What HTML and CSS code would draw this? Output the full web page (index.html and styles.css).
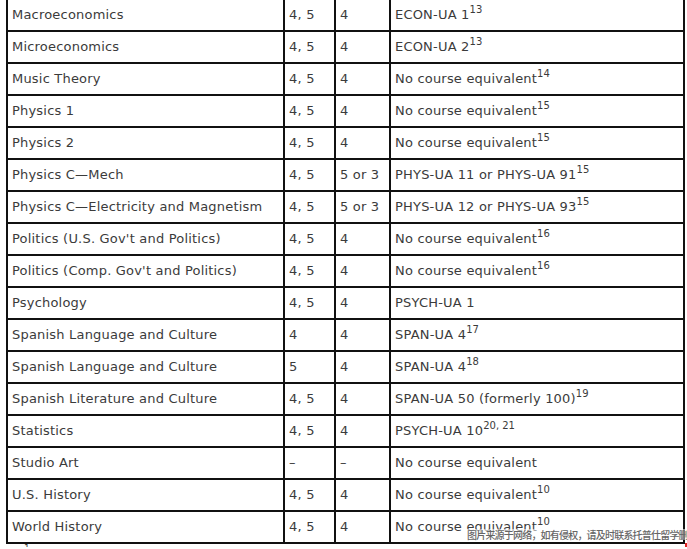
FILE: index.html
```html
<!DOCTYPE html>
<html>
<head>
<meta charset="utf-8">
<link rel="stylesheet" href="styles.css">
</head>
<body>
<div class="page">
  <table class="ap">
    <colgroup>
      <col class="c1"><col class="c2"><col class="c3"><col class="c4">
    </colgroup>
    <tbody>
      <tr><td>Macroeconomics</td><td>4, 5</td><td>4</td><td>ECON-UA 1<sup>13</sup></td></tr>
      <tr><td>Microeconomics</td><td>4, 5</td><td>4</td><td>ECON-UA 2<sup>13</sup></td></tr>
      <tr><td>Music Theory</td><td>4, 5</td><td>4</td><td>No course equivalent<sup>14</sup></td></tr>
      <tr><td>Physics 1</td><td>4, 5</td><td>4</td><td>No course equivalent<sup>15</sup></td></tr>
      <tr><td>Physics 2</td><td>4, 5</td><td>4</td><td>No course equivalent<sup>15</sup></td></tr>
      <tr><td>Physics C—Mech</td><td>4, 5</td><td>5 or 3</td><td>PHYS-UA 11 or PHYS-UA 91<sup>15</sup></td></tr>
      <tr><td>Physics C—Electricity and Magnetism</td><td>4, 5</td><td>5 or 3</td><td>PHYS-UA 12 or PHYS-UA 93<sup>15</sup></td></tr>
      <tr><td>Politics (U.S. Gov't and Politics)</td><td>4, 5</td><td>4</td><td>No course equivalent<sup>16</sup></td></tr>
      <tr><td>Politics (Comp. Gov't and Politics)</td><td>4, 5</td><td>4</td><td>No course equivalent<sup>16</sup></td></tr>
      <tr><td>Psychology</td><td>4, 5</td><td>4</td><td>PSYCH-UA 1</td></tr>
      <tr><td>Spanish Language and Culture</td><td>4</td><td>4</td><td>SPAN-UA 4<sup>17</sup></td></tr>
      <tr><td>Spanish Language and Culture</td><td>5</td><td>4</td><td>SPAN-UA 4<sup>18</sup></td></tr>
      <tr><td>Spanish Literature and Culture</td><td>4, 5</td><td>4</td><td>SPAN-UA 50 (formerly 100)<sup>19</sup></td></tr>
      <tr><td>Statistics</td><td>4, 5</td><td>4</td><td>PSYCH-UA 10<sup>20, 21</sup></td></tr>
      <tr><td>Studio Art</td><td>–</td><td>–</td><td>No course equivalent</td></tr>
      <tr><td>U.S. History</td><td>4, 5</td><td>4</td><td>No course equivalent<sup>10</sup></td></tr>
      <tr><td>World History</td><td>4, 5</td><td>4</td><td>No course equivalent<sup>10</sup></td></tr>
    </tbody>
  </table>
  <div class="foot"><sup>1</sup></div>
  <div class="watermark">图片来源于网络，如有侵权，请及时联系托普仕留学删除</div>
  <div class="redmark"></div>
</div>
</body>
</html>
```
FILE: styles.css
```css
html, body {
  margin: 0;
  padding: 0;
  background: #fff;
  overflow: hidden;
}
.page {
  position: relative;
  width: 687px;
  height: 549px;
  padding-left: 6px;
  box-sizing: border-box;
  font-family: "DejaVu Sans", sans-serif;
  color: #3b3b3b;
}
.ap {
  border-collapse: collapse;
  table-layout: fixed;
  width: 677px;
  margin-top: -2px;
}
.c1 { width: 277px; }
.c2 { width: 51px; }
.c3 { width: 55px; }
.c4 { width: 294px; }
.ap td {
  border: 2px solid #111;
  height: 30px;
  padding: 0 3px 0 4px;
  font-size: 13px;
  line-height: 16px;
  letter-spacing: 0.2px;
  white-space: nowrap;
  overflow: hidden;
  vertical-align: middle;
}
.ap sup {
  font-size: 10px;
  line-height: 0;
  vertical-align: 6px;
  letter-spacing: 0;
}
.foot {
  font-size: 10px;
  padding-left: 18px;
  height: 6px;
  line-height: 8px;
}
.foot sup { font-size: 9px; vertical-align: 0; }
.watermark {
  position: absolute;
  left: 466px;
  top: 531px;
  height: 11px;
  padding: 0 1px;
  background: rgba(255, 255, 255, 0.55);
  color: #666;
  font-family: "Noto Sans CJK SC", sans-serif;
  font-size: 10px;
  font-weight: 500;
  letter-spacing: -0.8px;
  line-height: 11px;
  white-space: nowrap;
}
.redmark {
  position: absolute;
  left: 685px;
  top: 545px;
  width: 2px;
  height: 4px;
  background: #d22;
}
```
